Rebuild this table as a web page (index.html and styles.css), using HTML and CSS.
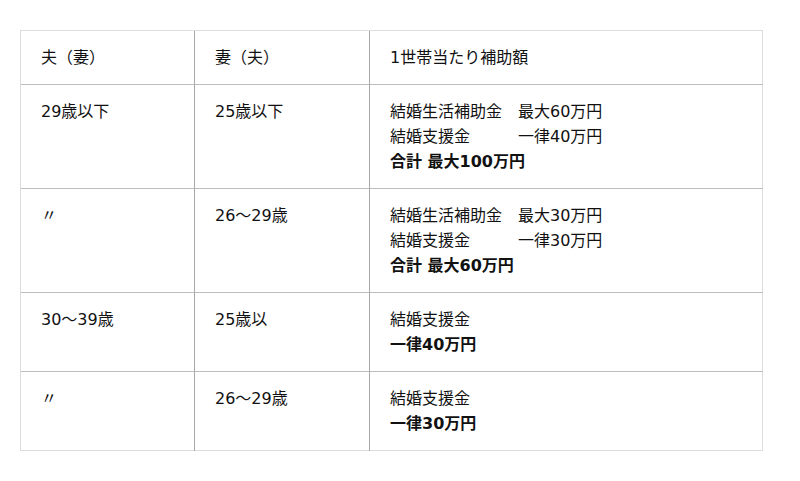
FILE: index.html
```html
<!DOCTYPE html>
<html lang="ja">
<head>
<meta charset="utf-8">
<link rel="stylesheet" href="styles.css">
</head>
<body>
<table class="subsidy">
  <colgroup>
    <col class="c1"><col class="c2"><col class="c3">
  </colgroup>
  <tr class="head">
    <td>夫（妻）</td>
    <td>妻（夫）</td>
    <td>1世帯当たり補助額</td>
  </tr>
  <tr>
    <td>29歳以下</td>
    <td>25歳以下</td>
    <td>結婚生活補助金　最大60万円<br>結婚支援金　　　一律40万円<br><strong>合計 最大100万円</strong></td>
  </tr>
  <tr>
    <td>〃</td>
    <td>26～29歳</td>
    <td>結婚生活補助金　最大30万円<br>結婚支援金　　　一律30万円<br><strong>合計 最大60万円</strong></td>
  </tr>
  <tr>
    <td>30～39歳</td>
    <td>25歳以</td>
    <td>結婚支援金<br><strong>一律40万円</strong></td>
  </tr>
  <tr>
    <td>〃</td>
    <td>26～29歳</td>
    <td>結婚支援金<br><strong>一律30万円</strong></td>
  </tr>
</table>
</body>
</html>
```
FILE: styles.css
```css
html, body {
  margin: 0;
  padding: 0;
  background: #fff;
}
body {
  padding: 30px 0 0 20px;
  font-family: "DejaVu Sans", "Noto Sans CJK JP", sans-serif;
  font-size: 16px;
  color: #111;
}
.subsidy {
  border-collapse: collapse;
  width: 742px;
  table-layout: fixed;
  border: 1px solid #dcdcdc;
}
.c1 { width: 174px; }
.c2 { width: 175px; }
.c3 { width: 393px; }
.subsidy td {
  padding: 14px 20px;
  line-height: 25px;
  vertical-align: top;
  border-top: 1px solid #bdbdbd;
  border-left: 1px solid #a8a8a8;
  text-align: left;
}
.subsidy tr:first-child td { border-top-color: #dcdcdc; }
.subsidy td:first-child { border-left-color: #dcdcdc; }
.subsidy strong { font-weight: bold; }
```
